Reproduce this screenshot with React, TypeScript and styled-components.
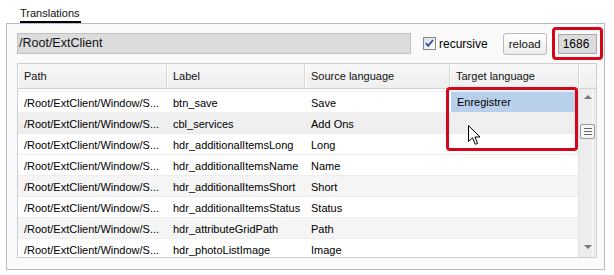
import React from 'react'
import styled, { createGlobalStyle } from 'styled-components'

const GlobalStyle = createGlobalStyle`
  html, body {
    margin: 0;
    padding: 0;
    background: #ffffff;
  }
  body {
    font-family: "Liberation Sans", Arial, sans-serif;
    font-size: 11px;
    color: #000;
  }
`

type Row = { path: string; label: string; source: string; target?: string; shade?: 'hover' | 'alt' }

const rows: Row[] = [
  { path: '/Root/ExtClient/Window/S...', label: 'btn_save', source: 'Save', target: 'Enregistrer' },
  { path: '/Root/ExtClient/Window/S...', label: 'cbl_services', source: 'Add Ons', shade: 'hover' },
  { path: '/Root/ExtClient/Window/S...', label: 'hdr_additionalItemsLong', source: 'Long' },
  { path: '/Root/ExtClient/Window/S...', label: 'hdr_additionalItemsName', source: 'Name' },
  { path: '/Root/ExtClient/Window/S...', label: 'hdr_additionalItemsShort', source: 'Short', shade: 'alt' },
  { path: '/Root/ExtClient/Window/S...', label: 'hdr_additionalItemsStatus', source: 'Status' },
  { path: '/Root/ExtClient/Window/S...', label: 'hdr_attributeGridPath', source: 'Path', shade: 'alt' },
  { path: '/Root/ExtClient/Window/S...', label: 'hdr_photoListImage', source: 'Image' },
]

const columns = ['Path', 'Label', 'Source language', 'Target language']

export default function App() {
  return (
    <Page>
      <GlobalStyle />
      <TabStrip>
        <Tab>Translations</Tab>
      </TabStrip>
      <Panel>
        <Toolbar>
          <PathField>/Root/ExtClient</PathField>
          <CheckLabel>
            <CheckBox />
            recursive
          </CheckLabel>
          <Button>reload</Button>
          <Counter>1686</Counter>
        </Toolbar>
        <Grid>
          <HeaderRow>
            {columns.map((c) => (
              <HeaderCell key={c}>{c}</HeaderCell>
            ))}
            <HeaderCell />
          </HeaderRow>
          <Body>
            <Rows>
              {rows.map((r, i) => (
                <GridRow key={i} shade={r.shade}>
                  <Cell>{r.path}</Cell>
                  <Cell>{r.label}</Cell>
                  <Cell>{r.source}</Cell>
                  <TargetCell>{r.target && <Selected>{r.target}</Selected>}</TargetCell>
                </GridRow>
              ))}
            </Rows>
            <ScrollBar>
              <Arrow dir="up" />
              <Thumb>
                <Grip />
                <Grip />
                <Grip />
              </Thumb>
              <Track />
              <Arrow dir="down" />
            </ScrollBar>
          </Body>
        </Grid>
      </Panel>

      <Highlight style={{ left: 552, top: 27, width: 51, height: 33 }} />
      <Highlight style={{ left: 446, top: 87, width: 132, height: 64 }} />
      <Cursor />
    </Page>
  )
}

const CheckBox = () => (
  <svg width="13" height="13" viewBox="0 0 13 13">
    <defs>
      <linearGradient id="cb" x1="0" y1="0" x2="1" y2="1">
        <stop offset="0" stopColor="#dcdcd8" />
        <stop offset="1" stopColor="#ffffff" />
      </linearGradient>
    </defs>
    <rect x="0.5" y="0.5" width="12" height="12" fill="url(#cb)" stroke="#7d8a99" />
    <path d="M3 6.2 L5.2 8.8 L10 3" fill="none" stroke="#2a4fa8" strokeWidth="1.8" />
  </svg>
)

const Cursor = () => (
  <CursorBox>
    <svg width="14" height="21" viewBox="0 0 14 21">
      <path
        d="M0.5 0.5 L0.5 16.5 L4.5 12.8 L7.3 19.3 L9.6 18.3 L6.9 12 L12 12 Z"
        fill="#ffffff"
        stroke="#000000"
        strokeWidth="1"
        strokeLinejoin="miter"
      />
    </svg>
  </CursorBox>
)

const Page = styled.div`
  position: relative;
  width: 614px;
  height: 275px;
  overflow: hidden;
`

const TabStrip = styled.div`
  height: 23px;
  padding-left: 20px;
  box-sizing: border-box;
`

const Tab = styled.div`
  display: inline-block;
  padding: 7px 1px 0 0;
  line-height: 13px;
  height: 14px;
  border-bottom: 2px solid #000;
  color: #111;
`

const Panel = styled.div`
  margin-left: 6px;
  width: 599px;
  height: 247px;
  box-sizing: border-box;
  border: 1px solid #b7bac6;
  background: #fafafa;
  padding: 9px 7px 0 10px;
`

const Toolbar = styled.div`
  display: flex;
  align-items: center;
  height: 21px;
`

const PathField = styled.div`
  width: 394px;
  height: 21px;
  box-sizing: border-box;
  background: #dcdcdc;
  border: 1px solid #c2c2c2;
  font-size: 12.5px;
  line-height: 19px;
  padding-left: 1px;
  color: #111;
`

const CheckLabel = styled.label`
  display: flex;
  align-items: center;
  gap: 3px;
  margin-left: 12px;
  font-size: 12px;
  svg {
    display: block;
  }
`

const Button = styled.div`
  margin-left: 15px;
  width: 44px;
  height: 22px;
  box-sizing: border-box;
  border: 1px solid #b9b9b9;
  border-radius: 3px;
  background: linear-gradient(#ffffff, #ececec);
  font-size: 11.5px;
  display: flex;
  align-items: center;
  justify-content: center;
  color: #111;
`

const Counter = styled.div`
  margin-left: 11px;
  width: 39px;
  height: 20px;
  box-sizing: border-box;
  background: #dcdcdc;
  border: 1px solid #a9a9a9;
  font-size: 12px;
  line-height: 18px;
  padding-left: 4px;
`

const Grid = styled.div`
  margin-top: 9px;
  width: 580px;
  height: 195px;
  box-sizing: border-box;
  border: 1px solid #cfcfcf;
  background: #ffffff;
  display: flex;
  flex-direction: column;
`

const HeaderRow = styled.div`
  display: grid;
  grid-template-columns: 149px 138px 145px 129px 1fr;
  height: 25px;
  box-sizing: border-box;
  background: linear-gradient(#f7f7f7, #efefef);
  border-bottom: 1px solid #d3d3d3;
`

const HeaderCell = styled.div`
  border-right: 1px solid #d8d8d8;
  box-shadow: inset 1px 0 0 #ffffff;
  padding-left: 6px;
  line-height: 24px;
  color: #111;
  &:last-child {
    border-right: none;
  }
`

const Body = styled.div`
  flex: 1;
  display: flex;
  min-height: 0;
  overflow: hidden;
  padding-top: 2px;
`

const Rows = styled.div`
  width: 561px;
  overflow: hidden;
`

const GridRow = styled.div<{ shade?: 'hover' | 'alt' }>`
  display: grid;
  grid-template-columns: 149px 138px 145px 129px;
  height: 21px;
  box-sizing: border-box;
  border-top: 1px solid #ededed;
  background: ${(p) => (p.shade === 'hover' ? '#efefef' : p.shade === 'alt' ? '#f5f5f5' : '#ffffff')};
`

const Cell = styled.div`
  padding: 2px 0 0 6px;
  line-height: 18px;
  white-space: nowrap;
  overflow: hidden;
`

const TargetCell = styled.div`
  padding-left: 1px;
  overflow: hidden;
`

const Selected = styled.div`
  background: #b8d0ec;
  height: 20px;
  line-height: 21px;
  padding-left: 6px;
`

const ScrollBar = styled.div`
  width: 17px;
  margin-top: -2px;
  display: flex;
  flex-direction: column;
  align-items: center;
  background: linear-gradient(90deg, #ededed 0, #ededed 13px, #f8f8f8 13px, #f8f8f8 14px, #ededed 14px);
  border-left: 1px solid #e2e2e2;
`

const Arrow = styled.div<{ dir: 'up' | 'down' }>`
  width: 0;
  height: 0;
  margin: ${(p) => (p.dir === 'up' ? '6px 0 0' : '0 0 8px')};
  border-left: 4px solid transparent;
  border-right: 4px solid transparent;
  ${(p) => (p.dir === 'up' ? 'border-bottom: 4px solid #777;' : 'border-top: 4px solid #777;')}
`

const Thumb = styled.div`
  margin-top: 25px;
  width: 15px;
  height: 15px;
  box-sizing: border-box;
  border: 1px solid #9a9a9a;
  border-radius: 2px;
  background: #f4f4f4;
  display: flex;
  flex-direction: column;
  justify-content: center;
  align-items: center;
  gap: 2px;
`

const Grip = styled.div`
  width: 8px;
  height: 1px;
  background: #666;
`

const Track = styled.div`
  flex: 1;
`

const Highlight = styled.div`
  position: absolute;
  box-sizing: border-box;
  border: 3px solid #d3071a;
  border-radius: 4px;
  pointer-events: none;
`

const CursorBox = styled.div`
  position: absolute;
  left: 468px;
  top: 125px;
  line-height: 0;
  pointer-events: none;
`
